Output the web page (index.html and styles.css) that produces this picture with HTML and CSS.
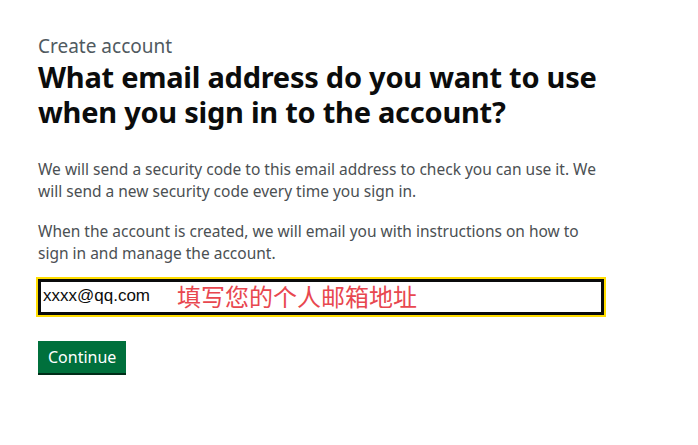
FILE: index.html
```html
<!DOCTYPE html>
<html lang="en">

<head>
    <meta charset="UTF-8">
    <meta name="viewport" content="width=device-width, initial-scale=1.0">
    <title>Create account</title>
    <link rel="stylesheet" href="styles.css">
</head>

<body>
    <main class="container">
        <span class="caption">Create account</span>
        <h1 class="heading">What email address do you want to use when you sign in to the account?</h1>

        <p class="body">We will send a security code to this email address to check you can use it. We will send a new security code every time you sign in.</p>
        <p class="body">When the account is created, we will email you with instructions on how to sign in and manage the account.</p>

        <div class="field">
            <input class="input" type="email" value="xxxx@qq.com" aria-label="Email address">
            <span class="note">填写您的个人邮箱地址</span>
        </div>

        <button class="button" type="submit">Continue</button>
    </main>
</body>

</html>
```

FILE: styles.css
```css
*,
*:before,
*:after {
    box-sizing: border-box;
    margin: 0;
    padding: 0;
}

html,
body {
    width: 100%;
    height: 100%;
    background: #fff;
    overflow: hidden;
}

body {
    font-family: "Noto Sans", "Liberation Sans", sans-serif;
    color: #0b0c0c;
}

.container {
    display: flex;
    flex-direction: column;
    align-items: flex-start;
    width: 574px;
    padding: 34px 0 0 38px;
    box-sizing: content-box;
}

.caption {
    font-size: 19px;
    line-height: 24px;
    color: #505a5f;
}

.heading {
    margin-top: 1px;
    font-size: 29px;
    line-height: 35px;
    font-weight: 700;
    letter-spacing: -0.25px;
}

.heading + .body {
    margin-top: 29px;
}

.body {
    font-size: 15.5px;
    line-height: 22px;
    color: #4b5053;
}

.body + .body {
    margin-top: 18px;
}

.field {
    position: relative;
    width: 570px;
    margin-left: -2px;
    margin-top: 13px;
    border: 2px solid #ffdd00;
}

.input {
    display: block;
    width: 100%;
    height: 36px;
    border: 3px solid #0b0c0c;
    padding: 0 4px 2px 2px;
    font-family: "Liberation Sans", Arial, sans-serif;
    font-size: 17px;
    color: #0b0c0c;
    outline: none;
}

.note {
    position: absolute;
    top: 2px;
    left: 139px;
    font-family: "Noto Sans CJK SC", sans-serif;
    font-size: 24px;
    line-height: 30px;
    color: #e8474f;
}

.button {
    margin-top: 24px;
    padding: 6px 10px 5px;
    font-family: "Noto Sans", "Liberation Sans", sans-serif;
    font-size: 16px;
    line-height: 21px;
    color: #fff;
    background: #00703c;
    border: none;
    box-shadow: 0 2px 0 #002d18;
    cursor: pointer;
}
```
